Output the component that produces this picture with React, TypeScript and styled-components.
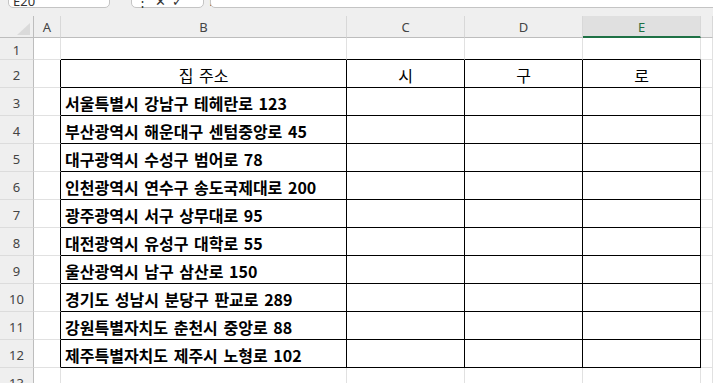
import React from "react";
import styled, { createGlobalStyle, css } from "styled-components";

const Global = createGlobalStyle`
  html, body { margin: 0; padding: 0; background: #ffffff; overflow: hidden; }
  body { font-family: "Noto Sans", "Noto Sans CJK KR", sans-serif; }
`;

const COLS = [34, 27, 286, 118, 118, 118];
const ROW_H = [22, 22, 28, 28, 28, 28, 28, 28, 28, 28, 28, 28, 28, 28];

const data = [
  "서울특별시 강남구 테헤란로 123",
  "부산광역시 해운대구 센텀중앙로 45",
  "대구광역시 수성구 범어로 78",
  "인천광역시 연수구 송도국제대로 200",
  "광주광역시 서구 상무대로 95",
  "대전광역시 유성구 대학로 55",
  "울산광역시 남구 삼산로 150",
  "경기도 성남시 분당구 판교로 289",
  "강원특별자치도 춘천시 중앙로 88",
  "제주특별자치도 제주시 노형로 102",
];

const Page = styled.div`
  width: 713px;
  height: 383px;
  background: #efefef;
  display: flex;
  flex-direction: column;
  overflow: hidden;
`;

const FormulaBar = styled.div`
  height: 16px;
  flex-shrink: 0;
  display: flex;
  align-items: flex-start;
  background: #efefef;
  overflow: hidden;
`;

const FBox = styled.div<{ $w?: number; $ml: number }>`
  margin-left: ${(p) => p.$ml}px;
  ${(p) => (p.$w ? `width: ${p.$w}px; flex-shrink: 0;` : "flex: 1;")}
  height: 30px;
  margin-top: -22px;
  background: #ffffff;
  border: 1px solid #c4c4c4;
  border-radius: 5px;
  box-sizing: border-box;
  display: flex;
  align-items: flex-end;
  padding: 0 4px 0 4px;
  font-family: "Noto Sans", sans-serif;
  font-size: 13px;
  color: #333;
  line-height: 12px;
  gap: 6px;
  ${(p) => (!p.$w ? "margin-right: -6px;" : "")}
`;

const Sheet = styled.div`
  display: grid;
  grid-template-columns: ${COLS.map((c) => c + "px").join(" ")} 1fr;
  grid-template-rows: ${ROW_H.map((r) => r + "px").join(" ")};
  flex: 1;
  min-height: 0;
  overflow: hidden;
  background: #ffffff;
`;

const ColHead = styled.div<{ $sel?: boolean }>`
  box-sizing: border-box;
  background: ${(p) => (p.$sel ? "#e0e0e0" : "#efefef")};
  border-right: 1px solid #d8d8d8;
  border-bottom: ${(p) => (p.$sel ? "2px solid #1e7145" : "1px solid #bdbdbd")};
  display: flex;
  align-items: center;
  justify-content: center;
  font-family: "Noto Sans", sans-serif;
  font-size: 13px;
  color: ${(p) => (p.$sel ? "#1e7145" : "#444")};
  padding-top: ${(p) => (p.$sel ? 1 : 0)}px;
`;

const Corner = styled.div`
  box-sizing: border-box;
  background: #efefef;
  border-right: 1px solid #bdbdbd;
  border-bottom: 1px solid #bdbdbd;
  position: relative;
  &::after {
    content: "";
    position: absolute;
    right: 3px;
    bottom: 2px;
    width: 0;
    height: 0;
    border-left: 13px solid transparent;
    border-bottom: 12px solid #dadada;
  }
`;

const RowHead = styled.div`
  box-sizing: border-box;
  background: #efefef;
  border-right: 1px solid #bdbdbd;
  border-bottom: 1px solid #dcdcdc;
  display: flex;
  align-items: center;
  justify-content: center;
  font-family: "Noto Sans", sans-serif;
  font-size: 13px;
  color: #444;
  padding-top: 3px;
`;

const Cell = styled.div<{ $r?: boolean; $b?: boolean; $bold?: boolean; $center?: boolean }>`
  box-sizing: border-box;
  border-right: 1px solid ${(p) => (p.$r ? "#000" : "#e1e1e1")};
  border-bottom: 1px solid ${(p) => (p.$b ? "#000" : "#e1e1e1")};
  display: flex;
  align-items: center;
  justify-content: ${(p) => (p.$center ? "center" : "flex-start")};
  padding: 2px 3px 0 4px;
  font-family: "Noto Sans CJK KR", "Noto Sans", sans-serif;
  font-size: 16px;
  line-height: 18px;
  word-spacing: 2px;
  font-weight: ${(p) => (p.$bold ? 700 : 400)};
  color: #000;
  white-space: nowrap;
  overflow: hidden;
  ${(p) =>
    p.$center &&
    css`
      padding-left: 0;
      padding-right: 0;
    `}
`;

const letters = ["A", "B", "C", "D", "E", ""];
const headers = ["집 주소", "시", "구", "로"];

export default function App() {
  const rows: React.ReactNode[] = [];
  rows.push(<Corner key="corner" />);
  letters.forEach((l, i) => rows.push(<ColHead key={"h" + i} $sel={l === "E"}>{l}</ColHead>));

  for (let r = 1; r <= 13; r++) {
    rows.push(<RowHead key={"rh" + r}>{r}</RowHead>);
    const inTable = r >= 2 && r <= 12;
    rows.push(<Cell key={r + "A"} $r={inTable} />);
    for (let c = 0; c < 4; c++) {
      let text = "";
      let bold = false;
      let center = false;
      if (r === 2) {
        text = headers[c];
        center = true;
      } else if (r >= 3 && r <= 12 && c === 0) {
        text = data[r - 3];
        bold = true;
      }
      rows.push(
        <Cell key={r + "c" + c} $r={inTable} $b={r >= 1 && r <= 12} $bold={bold} $center={center}>
          {text}
        </Cell>
      );
    }
    rows.push(<Cell key={r + "F"} />);
  }

  return (
    <>
      <Global />
      <Page>
        <FormulaBar>
          <FBox $ml={8} $w={102}>E20</FBox>
          <FBox $ml={21} $w={73}>
            <span>⋮</span>
            <span>✕</span>
            <span>✓</span>
            <span style={{ marginLeft: 20 }}>fx</span>
          </FBox>
          <FBox $ml={6} />
        </FormulaBar>
        <Sheet>{rows}</Sheet>
      </Page>
    </>
  );
}
